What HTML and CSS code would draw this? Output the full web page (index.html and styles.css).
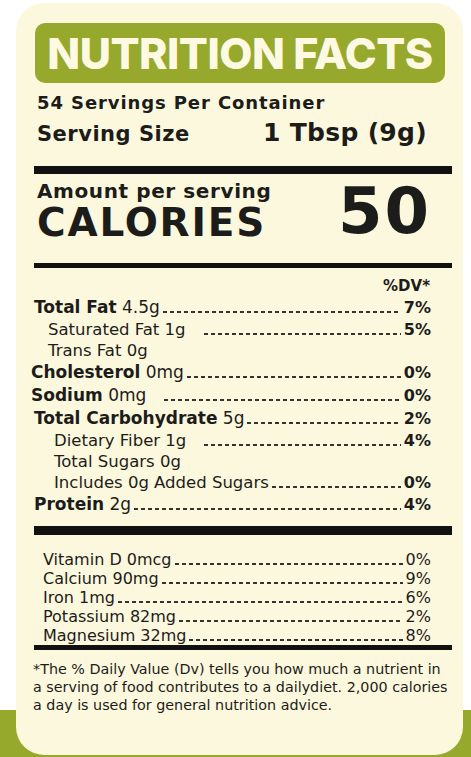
FILE: index.html
```html
<!DOCTYPE html>
<html lang="en">
<head>
    <meta charset="UTF-8">
    <meta name="viewport" content="width=device-width, initial-scale=1.0">
    <title>Nutrition Facts</title>
    <link rel="stylesheet" href="styles.css">
</head>
<body>

    <div class="label">
        <div class="title">NUTRITION FACTS</div>

        <p class="servings">54 Servings Per Container</p>
        <div class="serving-size">
            <span>Serving Size</span>
            <span class="size-value">1 Tbsp (9g)</span>
        </div>

        <div class="bar bar-thick"></div>

        <div class="calories">
            <div>
                <div class="amount">Amount per serving</div>
                <div class="cal-title">CALORIES</div>
            </div>
            <div class="cal-value">50</div>
        </div>

        <div class="bar bar-medium"></div>

        <div class="dv-head">%DV*</div>

        <div class="rows">
            <div class="row main"><span><b>Total Fat</b> 4.5g</span><i class="dots"></i><b class="pct">7%</b></div>
            <div class="row sub"><span>Saturated Fat 1g</span><i class="dots gap"></i><b class="pct">5%</b></div>
            <div class="row sub"><span>Trans Fat 0g</span></div>
            <div class="row main out"><span><b>Cholesterol</b> 0mg</span><i class="dots"></i><b class="pct">0%</b></div>
            <div class="row main out"><span><b>Sodium</b> 0mg</span><i class="dots gap"></i><b class="pct">0%</b></div>
            <div class="row main"><span><b>Total Carbohydrate</b> 5g</span><i class="dots"></i><b class="pct">2%</b></div>
            <div class="row sub deep"><span>Dietary Fiber 1g</span><i class="dots gap"></i><b class="pct">4%</b></div>
            <div class="row sub deep"><span>Total Sugars 0g</span></div>
            <div class="row sub deep"><span>Includes 0g Added Sugars</span><i class="dots"></i><b class="pct">0%</b></div>
            <div class="row main"><span><b>Protein</b> 2g</span><i class="dots"></i><b class="pct">4%</b></div>
        </div>

        <div class="bar bar-heavy"></div>

        <div class="vitamins">
            <div class="row"><span>Vitamin D 0mcg</span><i class="dots"></i><span>0%</span></div>
            <div class="row"><span>Calcium 90mg</span><i class="dots"></i><span>9%</span></div>
            <div class="row"><span>Iron 1mg</span><i class="dots"></i><span>6%</span></div>
            <div class="row"><span>Potassium 82mg</span><i class="dots"></i><span>2%</span></div>
            <div class="row"><span>Magnesium 32mg</span><i class="dots"></i><span>8%</span></div>
        </div>

        <div class="bar bar-medium"></div>

        <p class="footnote">*The % Daily Value (Dv) tells you how much a nutrient in<br>a serving of food contributes to a dailydiet. 2,000 calories<br>a day is used for general nutrition advice.</p>
    </div>

</body>
</html>
```

FILE: styles.css
```css
body {
    margin: 0;
    height: 757px;
    overflow: hidden;
    font-family: "DejaVu Sans", Inter, sans-serif;
    color: #1c1c1a;
    background: linear-gradient(#ffffff 710px, #97a92d 710px);
}

.label {
    box-sizing: border-box;
    width: 447px;
    height: 752px;
    margin: 3px 0 0 16px;
    padding: 20px 11px 0 18px;
    background-color: #fcf8de;
    border-radius: 28px;
}

.title {
    height: 60px;
    margin: 0 7px 0 1px;
    background-color: #97a92d;
    border-radius: 10px;
    color: #fdf9e2;
    font-family: Inter, sans-serif;
    font-size: 43px;
    font-weight: 800;
    line-height: 60px;
    text-align: center;
    letter-spacing: -0.5px;
    white-space: nowrap;
}

.servings {
    margin: 8px 0 0 3px;
    font-size: 18px;
    font-weight: 700;
    line-height: 24px;
    letter-spacing: 0.9px;
}

.serving-size {
    display: flex;
    justify-content: space-between;
    align-items: baseline;
    margin: 2px 25px 0 3px;
    font-size: 21px;
    font-weight: 700;
    line-height: 32px;
    letter-spacing: 0.5px;
}

.size-value {
    font-size: 25px;
    letter-spacing: 0.3px;
}

.bar {
    background-color: #111;
}

.bar-thick {
    height: 8px;
    margin-top: 16px;
}

.bar-medium {
    height: 5px;
}

.bar-heavy {
    height: 9px;
    margin-top: 10px;
}

.calories {
    display: flex;
    justify-content: space-between;
    align-items: center;
    padding: 5px 21px 20px 3px;
}

.amount {
    font-size: 20px;
    font-weight: 700;
    line-height: 24px;
    letter-spacing: 0.6px;
}

.cal-title {
    font-size: 39px;
    font-weight: 700;
    line-height: 40px;
    letter-spacing: 1.8px;
}

.cal-value {
    font-size: 64px;
    font-weight: 700;
    line-height: 62px;
    letter-spacing: 2px;
}

.dv-head {
    margin: 8px 22px 0 0;
    text-align: right;
    font-size: 15px;
    font-weight: 700;
    line-height: 20px;
}

.rows {
    margin-right: 21px;
}

.row {
    display: flex;
    align-items: baseline;
    font-size: 17px;
    line-height: 23px;
}

.row b {
    font-weight: 700;
}

.row.out {
    margin-left: -3px;
}

.row.sub {
    padding-left: 14px;
    font-size: 16.5px;
    line-height: 21px;
}

.row.deep {
    padding-left: 20px;
}

.dots {
    flex: 1;
    height: 2px;
    margin: 0 3px;
    background-image: repeating-linear-gradient(90deg, #333 0 4px, transparent 4px 7px);
}

.dots.gap {
    margin-left: 18px;
}

.pct {
    font-size: 16px;
}

.vitamins {
    margin: 15px 21px 0 9px;
}

.vitamins .row {
    font-size: 16px;
    line-height: 19px;
}

.footnote {
    margin: 10px -4px 0 -1px;
    font-size: 14.3px;
    line-height: 18px;
    white-space: nowrap;
}
```
